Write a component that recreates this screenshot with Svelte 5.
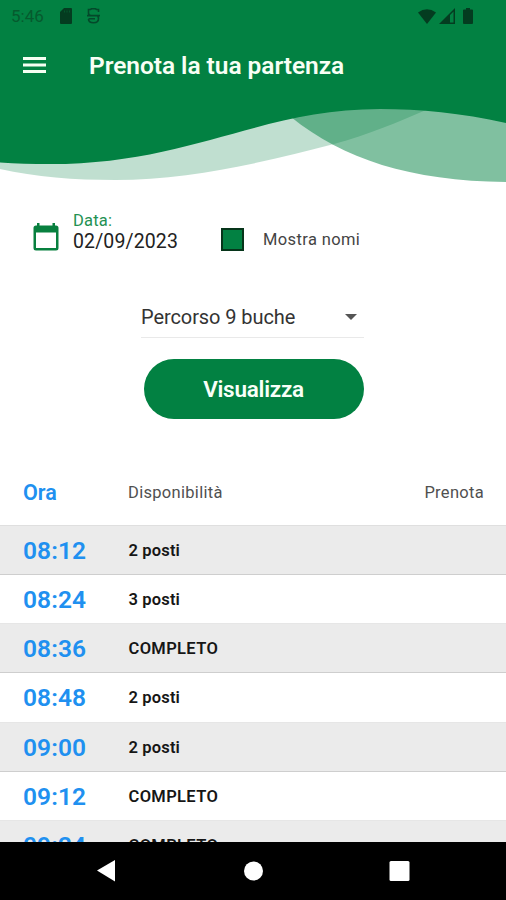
<script>
  const slots = [
    ['08:12', '2 posti'],
    ['08:24', '3 posti'],
    ['08:36', 'COMPLETO'],
    ['08:48', '2 posti'],
    ['09:00', '2 posti'],
    ['09:12', 'COMPLETO'],
    ['09:24', 'COMPLETO']
  ];
</script>

<div class="screen">
  <header>
    <svg class="waves" width="506" height="190" viewBox="0 0 506 190" aria-hidden="true">
      <path fill="#028142" fill-opacity=".25" d="M0 100V169C35 177 75 180 115 180C190 180 265 162 334 144C370 134 398 122 426 110V100Z" />
      <path fill="#028142" fill-opacity=".5" d="M280 100L291 117C343 159 410 181 506 182V100Z" />
      <path fill="#028142" d="M0 0H506V123C461 113 420 109 380 109C260 109 190 164 50 164C32 164 16 163.500 0 162.500Z" />
    </svg>
    <div class="status">
      <span class="clock">5:46</span>
      <svg class="sd" width="12" height="16" viewBox="0 0 12 16"><path fill="#043c20" d="M4 0H11Q12 0 12 1V15Q12 16 11 16H1Q0 16 0 15V4Z" /><path fill="#04562d" d="M4 2.500H5V4.500H4ZM6.500 2.500H7.500V4.500H6.500ZM9 2.500H10V4.500H9Z" /></svg>
      <svg class="debug" width="13" height="16" viewBox="0 0 13 16" fill="none" stroke="#04482a" stroke-width="1.600"><path d="M11.500 4V1.500H9.500L8.500 .8H4.500L3.500 1.500H1.500V5Q1.500 7.500 4 7.500H9Q11.500 7.500 11.500 10.500Q11.500 14.800 6.500 14.800Q1.500 14.800 1.500 11M0 7.600H13M1.500 10.800H8" /></svg>
      <div class="signals">
        <svg width="18" height="15" viewBox="0 0 18 15"><path fill="#043c20" d="M0 3.500Q9 -3 18 3.500L9 15Z" /></svg>
        <svg class="cell" width="16" height="16" viewBox="0 0 16 16"><path fill="#043c20" fill-rule="evenodd" d="M0 16L16 0V16ZM11 7V14.500H14.500V3.500Z" /></svg>
        <svg class="battery" width="10" height="16" viewBox="0 0 10 16"><path fill="#043c20" d="M3 0H7V1.500H9Q10 1.500 10 2.500V15Q10 16 9 16H1Q0 16 0 15V2.500Q0 1.500 1 1.500H3Z" /></svg>
      </div>
    </div>
    <div class="toolbar">
      <svg width="23" height="16" viewBox="0 0 23 16"><path fill="#f5fff2" d="M0 0H23V3H0ZM0 6.500H23V9.500H0ZM0 13H23V16H0Z" /></svg>
      <h1>Prenota la tua partenza</h1>
    </div>
  </header>

  <div class="filters">
    <svg class="calendar" width="26" height="28" viewBox="0 0 26 28"><path fill="#08803f" fill-rule="evenodd" d="M4 0H6.500V2.500H19.500V0H22V2.500H23Q25.500 2.500 25.500 5V25Q25.500 27.500 23 27.500H3Q.5 27.500 .5 25V5Q.5 2.500 3 2.500H4ZM3 9.500V25H23V9.500Z" /></svg>
    <div class="date">
      <span class="label">Data:</span>
      <span class="value">02/09/2023</span>
    </div>
    <span class="check"></span>
    <span class="names">Mostra nomi</span>
  </div>

  <div class="course">
    <span>Percorso 9 buche</span>
    <svg width="12" height="6" viewBox="0 0 12 6"><path fill="#555" d="M0 0H12L6 6Z" /></svg>
  </div>
  <button><span>Visualizza</span></button>

  <div class="thead">
    <b>Ora</b><span class="avail">Disponibilità</span><span class="book">Prenota</span>
  </div>
  <div class="rows">
    {#each slots as [time, status], i}
      <div class="row" class:shaded={i % 2 === 0}>
        <span class="time">{time}</span>
        <span class="state" class:full={status === 'COMPLETO'}>{status}</span>
      </div>
    {/each}
  </div>

  <nav>
    <svg width="506" height="58" viewBox="0 0 506 58" fill="#fff">
      <path d="M97 28.500L115 18V39.500Z" />
      <circle cx="253.500" cy="29" r="9.500" />
      <rect x="389.500" y="19" width="20" height="20" rx="1.500" />
    </svg>
  </nav>
</div>

<style>
  .screen { width: 506px; height: 900px; display: flex; flex-direction: column; overflow: hidden; background: #fff; font-family: Roboto, sans-serif; color: #222; white-space: nowrap; }
  svg { display: block; flex: none; }
  header { position: relative; height: 190px; flex: none; }
  .waves { position: absolute; top: 0; left: 0; }
  .status { position: relative; display: flex; align-items: center; height: 32px; padding-left: 11px; color: #065a2e; font-size: 17px; }
  .clock { width: 49px; }
  .debug { margin-left: 15px; }
  .signals { display: flex; align-items: center; margin-left: auto; padding-right: 33px; }
  .cell { margin-left: 3px; }
  .battery { margin-left: 8px; }
  .toolbar { position: relative; display: flex; align-items: center; height: 66px; padding-left: 23px; }
  h1 { margin: 2px 0 0 43px; font-size: 24.500px; font-weight: 600; letter-spacing: -.05px; color: #f8fff5; line-height: 30px; }
  .filters { display: flex; height: 98px; flex: none; padding-left: 33px; }
  .calendar { margin-top: 33px; }
  .date { display: flex; flex-direction: column; width: 148px; margin: 21px 0 0 14px; }
  .label { font-size: 16.500px; line-height: 20px; color: #239153; letter-spacing: .2px; }
  .value { font-size: 19.500px; line-height: 22px; letter-spacing: .12px; }
  .check { box-sizing: border-box; width: 23px; height: 23px; margin-top: 38px; border: 2px solid #06351a; background: #028142; }
  .names { margin: 39px 0 0 19px; font-size: 16.500px; line-height: 22px; color: #444; letter-spacing: .38px; }
  .course { box-sizing: border-box; display: flex; align-items: center; justify-content: space-between; width: 223px; height: 50px; margin-left: 141px; padding: 9px 7px 0 0; border-bottom: 1px solid #e9e9e9; font-size: 20px; color: #333; letter-spacing: -.08px; flex: none; }
  button { width: 220px; height: 60px; margin: 21px 0 0 143.500px; padding: 0; border: 0; border-radius: 30px; background: #028142; color: #f8fff8; font: 600 22.500px Roboto, sans-serif; letter-spacing: -.25px; flex: none; }
  .thead { display: flex; align-items: center; height: 66px; margin: 40px 22px 0 23px; flex: none; font-size: 16.500px; color: #505050; }
  .thead b { width: 105px; color: #2090f0; font-size: 21.500px; font-weight: 600; }
  .avail { letter-spacing: .3px; }
  .book { margin-left: auto; letter-spacing: .3px; }
  .rows { height: 317px; overflow: hidden; flex: none; }
  .row { box-sizing: border-box; height: 49.200px; display: flex; align-items: center; padding: 1px 0 0 23px; border-bottom: 1px solid #e6e6e6; }
  .shaded { background: #ebebeb; border-bottom-color: #cecece; }
  .row:first-child { border-top: 1px solid #dfdfdf; height: 50px; padding-top: 0; }
  .time { width: 105.500px; color: #2090f0; font-size: 24.500px; font-weight: 600; letter-spacing: .1px; }
  .state { color: #161616; font-size: 16.500px; font-weight: 600; letter-spacing: .15px; }
  .full { letter-spacing: .35px; }
  nav { height: 58px; background: #000; flex: none; }
</style>
